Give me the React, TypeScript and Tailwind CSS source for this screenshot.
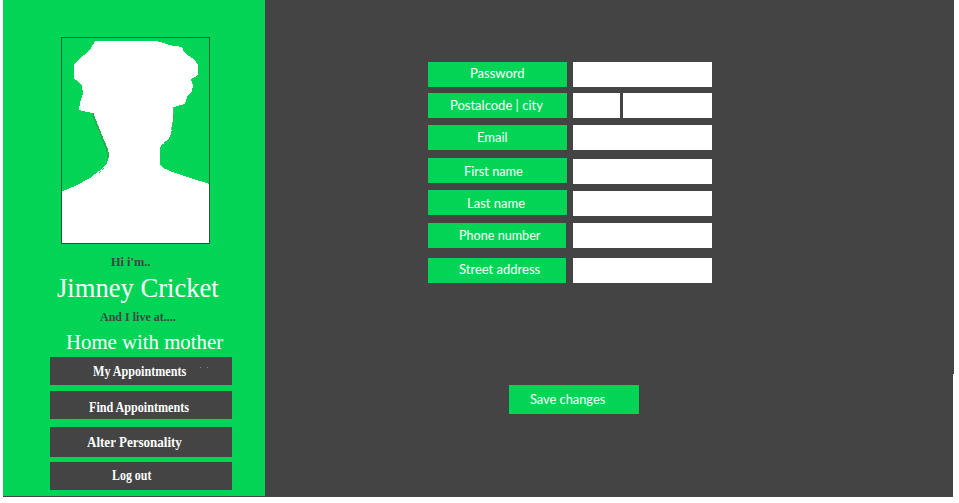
const fields = [
  { label: 'Password', row: '', box: 'w-[139px] pl-[42px] leading-[23px]', text: '', input: '' },
  { label: 'Postalcode | city', row: 'mt-[6px]', box: 'w-[139px] pl-[22px] leading-[25px]', text: '', input: '', split: true },
  { label: 'Email', row: 'mt-[7px]', box: 'w-[139px] pl-[49px] leading-[25px]', text: '', input: '' },
  { label: 'First name', row: 'mt-[8px]', box: 'w-[139px] pl-[36px] leading-[26px]', text: 'scale-x-[0.98]', input: 'mt-px' },
  { label: 'Last name', row: 'mt-[7px]', box: 'w-[139px] pl-[39px] leading-[26px]', text: '', input: 'mt-px' },
  { label: 'Phone number', row: 'mt-[8px]', box: 'w-[138px] pl-[31px] leading-[25px]', text: 'scale-x-[0.97]', input: '' },
  { label: 'Street address', row: 'mt-[10px]', box: 'w-[138px] pl-[31px] leading-[23px]', text: '', input: '' },
];

const menu = [
  { label: 'My Appointments', style: 'h-[28px] pl-[43px] leading-[27px]', text: 'scale-x-[0.865]', specks: true },
  { label: 'Find Appointments', style: 'mt-[6px] h-[28px] pl-[39px] leading-[34px]', text: 'scale-x-[0.865]' },
  { label: 'Alter Personality', style: 'mt-[8px] h-[30px] pl-[37px] leading-[27px]', text: 'scale-x-[0.93]' },
  { label: 'Log out', style: 'mt-[5px] h-[28px] pl-[62px] leading-[28px]', text: 'scale-x-[0.85]' },
];

function Avatar() {
  return (
    <svg className="ml-[58px] block h-[207px] w-[149px]" viewBox="61 37 149 207" shapeRendering="crispEdges">
      <path
        d="M95 41H156L164 43L169 45L182 47L184 52L189 56L194 59L198 65V74L195 77L191 79L193 85L192 91L187 97L185 104L174 107L173 122L171 134L168 140L160 147V164L163 168L175 173L190 178L210 184V244H61V192L75 186L90 178L99 171L107 163L109 156L107 148L102 136L95 119L92 113L79 110L80 103L83 94L82 86L78 81L74 79V64L80 58L87 53L91 48Z"
        fill="#fff"
      />
      <path d="M92.500 113L95 120L101 135L106.500 148L108 154L107.500 159" fill="none" stroke="#22b14c" strokeWidth="1.800" />
      <path d="M174 107L173 122L171.500 130" fill="none" stroke="#22b14c" strokeWidth="0.800" />
      <path d="M161 146L167 140M99 173L105 167" stroke="#02d556" strokeDasharray="1 1" />
      <rect x="61.5" y="37.5" width="148" height="206" fill="none" stroke="#245b35" />
    </svg>
  );
}

export default function App() {
  return (
    <div className="h-[503px] w-[959px] overflow-hidden bg-white pl-[3px]">
      <div className="flex">
        <aside className="h-[497px] w-[262px] border-b border-[#444] bg-[#02d556] pt-[37px] font-['Liberation_Serif',serif] whitespace-nowrap text-white">
          <Avatar />
          <p className="mt-[10px] h-[16px] pl-[108px] text-[13px] leading-[16px] font-bold text-[#444]">
            <span className="inline-block origin-left scale-x-[0.95]">Hi i'm..</span>
          </p>
          <h1 className="mt-[2px] h-[32px] pl-[54px] text-[27px] leading-[33px]">
            <span className="inline-block origin-left scale-x-[0.985]">Jimney Cricket</span>
          </h1>
          <p className="mt-[5px] h-[16px] pl-[97px] text-[13px] leading-[16px] font-bold text-[#444]">
            <span className="inline-block origin-left scale-x-[0.925]">And I live at....</span>
          </p>
          <h2 className="mt-[5px] h-[27px] pl-[63px] text-[21px] leading-[24px]">
            <span className="inline-block origin-left scale-x-[0.99]">Home with mother</span>
          </h2>
          <nav className="ml-[47px] w-[182px]">
            {menu.map((m) => (
              <button key={m.label} className={`relative block w-full bg-[#444] text-left text-[14px] font-bold ${m.style}`}>
                <span className={`block w-fit origin-left ${m.text}`}>{m.label}</span>
                {m.specks && (
                  <span className="absolute top-[10px] left-[150px] flex gap-[6px]">
                    <i className="size-px bg-[#888]" />
                    <i className="size-px bg-[#888]" />
                  </span>
                )}
              </button>
            ))}
          </nav>
        </aside>
        <main className="relative h-[497px] w-[689px] bg-[#444] pt-[62px] pl-[163px] font-[Lato,sans-serif] text-[13px] whitespace-nowrap text-white">
          {fields.map((f) => (
            <div key={f.label} className={`flex h-[25px] ${f.row}`}>
              <div className="w-[145px]">
                <label className={`block h-[25px] bg-[#02d556] ${f.box}`}>
                  <span className={`block w-fit origin-left ${f.text}`}>{f.label}</span>
                </label>
              </div>
              {f.split ? (
                <div className="flex gap-[3px]">
                  <input className="h-[25px] w-[47px] bg-white" />
                  <input className="h-[25px] w-[89px] bg-white" />
                </div>
              ) : (
                <input className={`h-[25px] w-[139px] bg-white ${f.input}`} />
              )}
            </div>
          ))}
          <button className="mt-[102px] ml-[81px] block h-[29px] w-[130px] bg-[#02d556] pl-[21px] text-left leading-[28px]">
            <span className="-mt-px block w-fit origin-left scale-x-[0.985]">Save changes</span>
          </button>
          <div className="absolute right-0 bottom-0 h-[123px] w-px bg-white" />
        </main>
      </div>
    </div>
  );
}
